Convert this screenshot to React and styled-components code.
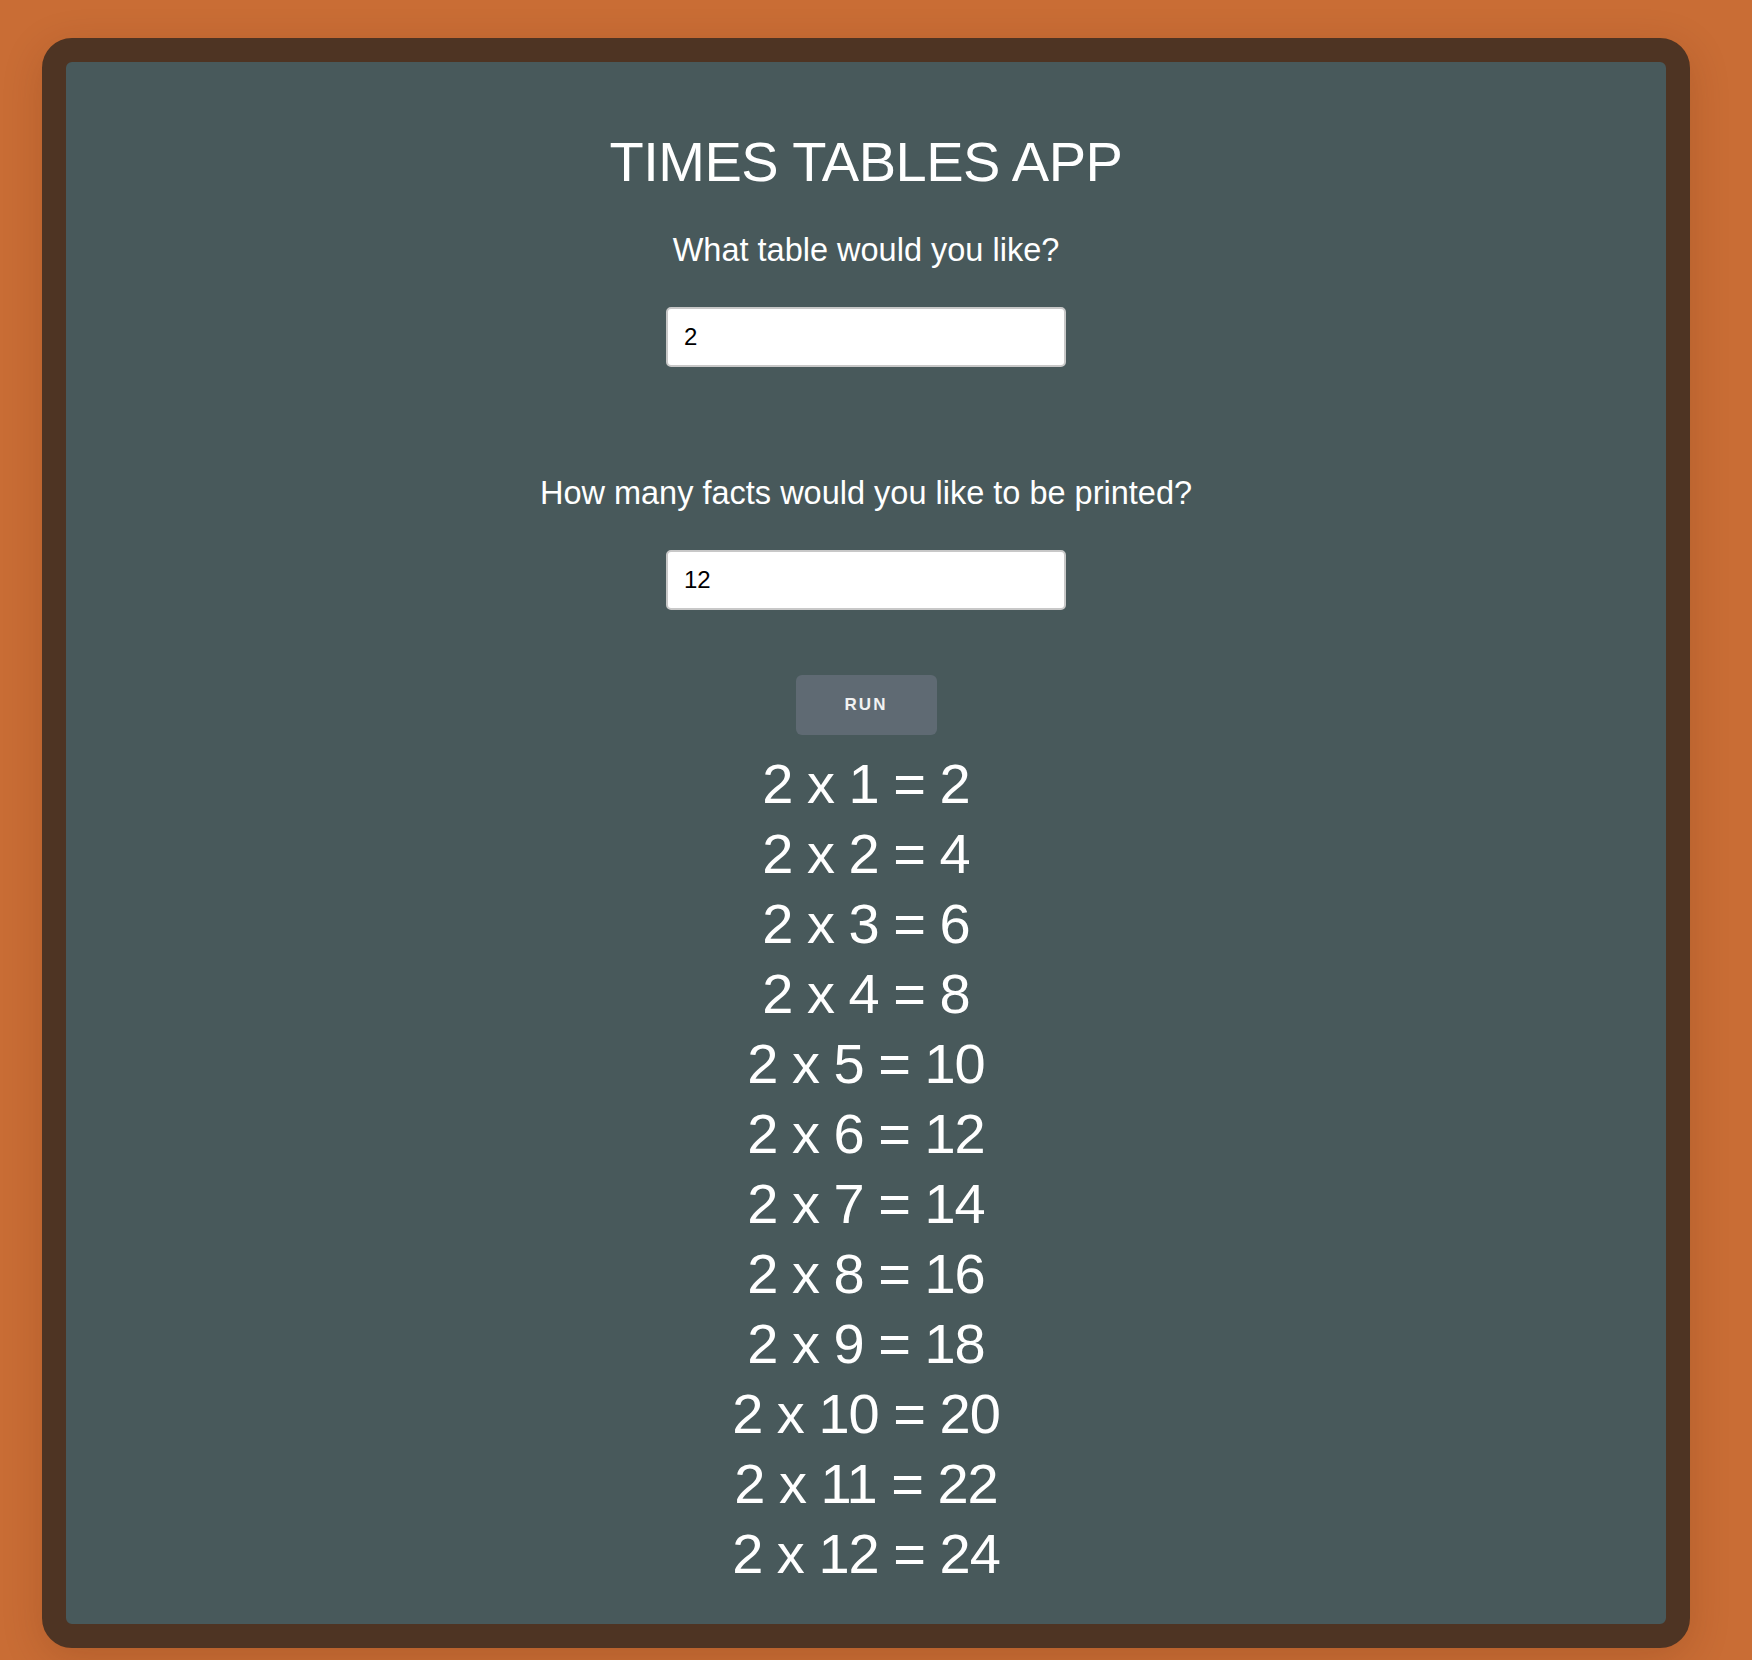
import React, { useState } from 'react';
import styled, { createGlobalStyle } from 'styled-components';

const GlobalStyle = createGlobalStyle`
html, body {
  margin: 0;
  padding: 0;
  background: #c96d35;
  min-height: 1660px;
}
body {
  font-family: "Liberation Sans", Arial, Helvetica, sans-serif;
}
`;

const Page = styled.div`
padding: 38px 0 14px 42px;
`;

const Board = styled.div`
width: 1648px;
box-sizing: border-box;
border: 24px solid #4e3423;
border-radius: 30px;
background: #48595b;
box-shadow: 0 10px 40px rgba(80, 30, 0, 0.18);
display: flex;
flex-direction: column;
align-items: center;
padding: 68px 0 35px;
`;

const Title = styled.h1`
margin: 0;
font-size: 56px;
line-height: 64px;
font-weight: 400;
color: #ffffff;
letter-spacing: -0.5px;
`;

const Question = styled.label`
display: block;
font-size: 32.5px;
line-height: 40px;
color: #ffffff;
margin-top: ${(p) => p.top}px;
`;

const NumberInput = styled.input`
box-sizing: border-box;
width: 400px;
height: 60px;
margin-top: 37px;
padding: 0 16px;
border: 2px solid #c8c8c8;
border-radius: 5px;
background: #ffffff;
font-family: "Liberation Sans", Arial, sans-serif;
font-size: 24px;
color: #000000;
outline: none;
`;

const RunButton = styled.button`
width: 141px;
height: 60px;
margin-top: 65px;
border: none;
border-radius: 6px;
background: #5f6a73;
color: #f2f2f2;
font-family: "Liberation Sans", Arial, sans-serif;
font-weight: 700;
font-size: 17px;
letter-spacing: 2px;
cursor: pointer;
`;

const Facts = styled.ul`
list-style: none;
margin: 14px 0 0;
padding: 0;
display: flex;
flex-direction: column;
align-items: center;
`;

const Fact = styled.li`
font-size: 56px;
line-height: 70px;
letter-spacing: -1px;
color: #ffffff;
`;

const App = () => {
  const [table, setTable] = useState('2');
  const [count, setCount] = useState('12');
  const [facts, setFacts] = useState({ table: 2, count: 12 });

  const run = () => {
    setFacts({ table: Number(table) || 0, count: Number(count) || 0 });
  };

  const rows = [];
  for (let i = 1; i <= facts.count; i++) {
    rows.push(<Fact key={i}>{facts.table} x {i} = {facts.table * i}</Fact>);
  }

  return (
    <>
      <GlobalStyle />
      <Page>
        <Board>
          <Title>TIMES TABLES APP</Title>
          <Question top={36}>What table would you like?</Question>
          <NumberInput value={table} onChange={(e) => setTable(e.target.value)} />
          <Question top={106}>How many facts would you like to be printed?</Question>
          <NumberInput value={count} onChange={(e) => setCount(e.target.value)} />
          <RunButton onClick={run}>RUN</RunButton>
          <Facts>{rows}</Facts>
        </Board>
      </Page>
    </>
  );
};

export default App;
